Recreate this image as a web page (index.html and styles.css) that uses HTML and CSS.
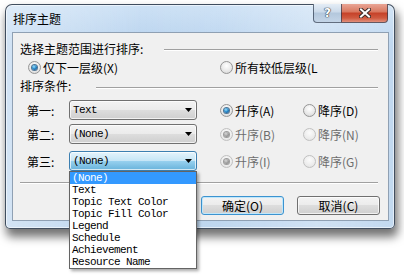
FILE: index.html
```html
<!DOCTYPE html>
<html lang="zh-CN">
<head>
    <meta charset="UTF-8">
    <meta name="viewport" content="width=device-width, initial-scale=1.0">
    <title>排序主题</title>
    <link rel="stylesheet" href="styles.css">
</head>
<body>
    <div class="window">
        <div class="titlebar">
            <span class="title">排序主题</span>
            <div class="caption-buttons">
                <span class="cap-btn help">?</span>
                <span class="cap-btn close">
                    <svg width="12" height="10" viewBox="0 0 12 10">
                        <path d="M2 1.5 L10 8.5 M10 1.5 L2 8.5" stroke="#3a2a28" stroke-width="4" stroke-linecap="square"/>
                        <path d="M2 1.5 L10 8.5 M10 1.5 L2 8.5" stroke="#fff" stroke-width="2" stroke-linecap="square"/>
                    </svg>
                </span>
            </div>
        </div>

        <div class="client">
            <!-- scope -->
            <div class="group-head scope-head">
                <span>选择主题范围进行排序:</span>
                <span class="rule"></span>
            </div>
            <div class="scope-row">
                <label class="option first-option"><span class="radio checked"></span>仅下一层级(X)</label>
                <label class="option"><span class="radio"></span>所有较低层级(L</label>
            </div>

            <!-- sort conditions -->
            <div class="group-head order-head">
                <span>排序条件:</span>
                <span class="rule"></span>
            </div>

            <div class="sort-row row-one">
                <span class="row-label">第一:</span>
                <div class="combo"><span>Text</span><svg width="7" height="4" viewBox="0 0 7 4"><polygon points="0,0 7,0 3.5,4" fill="#000"/></svg></div>
                <label class="option asc"><span class="radio checked"></span>升序(A)</label>
                <label class="option"><span class="radio"></span>降序(D)</label>
            </div>
            <div class="sort-row row-two">
                <span class="row-label">第二:</span>
                <div class="combo"><span>(None)</span><svg width="7" height="4" viewBox="0 0 7 4"><polygon points="0,0 7,0 3.5,4" fill="#000"/></svg></div>
                <label class="option asc disabled"><span class="radio checked"></span>升序(B)</label>
                <label class="option disabled"><span class="radio"></span>降序(N)</label>
            </div>
            <div class="sort-row row-three">
                <span class="row-label">第三:</span>
                <div class="combo open"><span>(None)</span><svg width="7" height="4" viewBox="0 0 7 4"><polygon points="0,0 7,0 3.5,4" fill="#000"/></svg></div>
                <label class="option asc disabled"><span class="radio checked"></span>升序(I)</label>
                <label class="option disabled"><span class="radio"></span>降序(G)</label>
            </div>

            <div class="separator"></div>

            <div class="actions">
                <button class="btn default">确定(O)</button>
                <button class="btn">取消(C)</button>
            </div>

            <!-- open list of the third combo -->
            <ul class="dropdown">
                <li class="selected">(None)</li>
                <li>Text</li>
                <li>Topic Text Color</li>
                <li>Topic Fill Color</li>
                <li>Legend</li>
                <li>Schedule</li>
                <li>Achievement</li>
                <li>Resource Name</li>
            </ul>
        </div>
    </div>
</body>
</html>
```

FILE: styles.css
```css
body {
    margin: 0;
    min-height: 279px;
    background-color: #fff;
    font-family: "Noto Sans CJK SC", "Liberation Sans", sans-serif;
    font-size: 12px;
    color: #000;
}

.window {
    display: flex;
    flex-direction: column;
    box-sizing: border-box;
    width: 390px;
    height: 225px;
    margin: 4px 0 0 5px;
    padding: 0 5px 7px 6px;
    border: 1px solid rgba(40, 52, 68, 0.85);
    border-radius: 7px 7px 5px 5px;
    background:
        linear-gradient(90deg, rgba(255, 255, 255, 0.35), rgba(255, 255, 255, 0) 35%, rgba(255, 255, 255, 0.05) 55%, rgba(255, 255, 255, 0.3) 80%, rgba(255, 255, 255, 0.1)),
        linear-gradient(#cde1f5, #b9d3ee 40px, #bcd5ee);
    box-shadow: 2px 7px 10px 1px rgba(0, 0, 0, 0.55), inset 0 0 0 1px rgba(255, 255, 255, 0.55);
}

.titlebar {
    display: flex;
    height: 27px;
}

.title {
    align-self: center;
    padding-left: 1px;
    line-height: 14px;
}

.caption-buttons {
    display: flex;
    margin-left: auto;
    margin-right: 1px;
    align-items: flex-start;
}

.cap-btn {
    display: flex;
    align-items: center;
    justify-content: center;
    box-sizing: border-box;
    height: 19px;
    margin-top: -1px;
    border: 1px solid rgba(45, 58, 78, 0.7);
    border-top: none;
}

.help {
    width: 28px;
    border-right: none;
    border-radius: 0 0 0 4px;
    background: linear-gradient(#e4edf6, #cad9e9 45%, #b3c7dc 50%, #c4d5e7);
    font-family: "DejaVu Sans", sans-serif;
    font-weight: bold;
    font-size: 12px;
    color: #fff;
    text-shadow: 0 0 1px #2e3846, 0 0 1px #2e3846, 0 0 1px #2e3846;
}

.close {
    width: 47px;
    border-radius: 0 0 4px 0;
    background: linear-gradient(#e9a595, #d97a62 42%, #c6432a 52%, #cf5a40 78%, #e2907c);
}

.client {
    position: relative;
    flex: 1;
    padding: 0 10px 0 7px;
    border: 1px solid #8fa0b3;
    background-color: #f0f0f0;
}

.group-head {
    display: flex;
    align-items: center;
    white-space: nowrap;
}

.scope-head {
    height: 14px;
    margin-top: 8px;
}

.order-head {
    height: 10px;
}

.rule {
    flex: 1;
    height: 1px;
    background-color: #a0a0a0;
    box-shadow: 0 1px 0 #fff;
}

.scope-head .rule {
    margin: 2px 0 0 21px;
}

.order-head .rule {
    margin: 4px 0 0 25px;
}

.scope-row {
    display: flex;
    align-items: center;
    height: 25px;
    padding-left: 8px;
}

.first-option {
    width: 192px;
}

.option {
    display: flex;
    align-items: center;
    gap: 2px;
    white-space: nowrap;
}

.option.disabled {
    color: #6d6d6d;
}

.radio {
    display: flex;
    align-items: center;
    justify-content: center;
    box-sizing: border-box;
    width: 13px;
    height: 13px;
    border: 1px solid #959595;
    border-radius: 50%;
    background: radial-gradient(circle at 50% 35%, #ffffff, #e9e9e9 55%, #d2d2d2);
}

.radio.checked::after {
    content: "";
    width: 5px;
    height: 5px;
    border-radius: 50%;
    background: radial-gradient(circle at 40% 35%, #9fe0fb, #2a8ccc 45%, #0f4f8c 85%);
    box-shadow: 0 0 0 1px #4f7594;
}

.disabled .radio {
    border-color: #c0c0c0;
    background: radial-gradient(circle at 50% 35%, #fbfbfb, #ececec 60%, #dedede);
}

.disabled .radio.checked::after {
    background: radial-gradient(circle at 40% 35%, #d8d8d8, #9a9a9a 55%, #7a7a7a);
    box-shadow: 0 0 0 1px #9c9c9c;
}

.sort-row {
    display: flex;
    align-items: center;
    height: 20px;
    padding-left: 7px;
}

.row-one {
    margin-top: 10px;
}

.row-two {
    margin-top: 4px;
}

.row-three {
    margin-top: 7px;
}

.row-label {
    width: 42px;
}

.combo {
    display: flex;
    align-items: center;
    justify-content: space-between;
    box-sizing: border-box;
    width: 128px;
    height: 20px;
    padding: 0 4px 0 3px;
    border: 1px solid #707070;
    border-radius: 3px;
    background: linear-gradient(#f3f3f3, #ebebeb 50%, #dddddd 50%, #cfcfcf);
    box-shadow: inset 0 0 0 1px rgba(255, 255, 255, 0.7);
    font-family: "Liberation Mono", monospace;
    font-size: 11px;
    letter-spacing: -0.6px;
}

.combo.open {
    border-color: #3c7fb1;
    background: linear-gradient(#e5f4fc, #c4e5f6 50%, #98d1ef 50%, #68b3db);
}

.asc {
    width: 83px;
    margin-left: 23px;
}

.separator {
    height: 1px;
    margin-top: 11px;
    background-color: #a0a0a0;
    box-shadow: 0 1px 0 #fff;
}

.actions {
    display: flex;
    justify-content: flex-end;
    gap: 13px;
    margin: 13px -2px 0 0;
}

.btn {
    box-sizing: border-box;
    width: 83px;
    height: 19px;
    padding: 0;
    border: 1px solid #707070;
    border-radius: 3px;
    background: linear-gradient(#f3f3f3, #ebebeb 50%, #dddddd 50%, #cfcfcf);
    box-shadow: inset 0 0 0 1px rgba(255, 255, 255, 0.7);
    font-family: "Noto Sans CJK SC", sans-serif;
    font-size: 12px;
    line-height: 17px;
    color: #000;
}

.btn.default {
    border-color: #3c93d0;
    box-shadow: inset 0 0 0 1px #bfe7fb;
}

.dropdown {
    position: absolute;
    left: 56px;
    top: 138px;
    box-sizing: border-box;
    width: 128px;
    margin: 0;
    padding: 0;
    list-style: none;
    border: 1px solid #646464;
    background-color: #fff;
    box-shadow: 2px 2px 3px rgba(0, 0, 0, 0.35);
    font-family: "Liberation Mono", monospace;
    font-size: 11px;
    letter-spacing: -0.6px;
}

.dropdown li {
    height: 12px;
    padding-left: 2px;
    line-height: 12px;
    white-space: nowrap;
}

.dropdown li.selected {
    background-color: #3399ff;
    color: #fff;
}
```
